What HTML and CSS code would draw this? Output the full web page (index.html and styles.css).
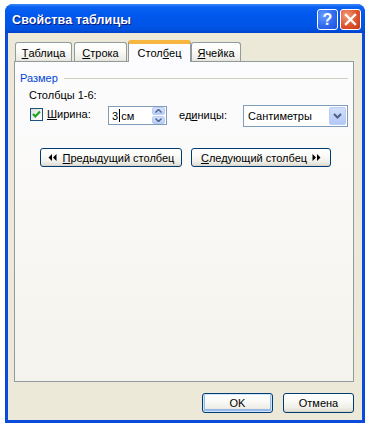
FILE: index.html
```html
<!DOCTYPE html>
<html lang="ru">
<head>
<meta charset="utf-8">
<title>Свойства таблицы</title>
<link rel="stylesheet" href="styles.css">
</head>
<body>
<div class="window">
  <div class="titlebar">
    <span class="title">Свойства таблицы</span>
    <div class="caption-btns">
      <div class="cbtn help">?</div>
      <div class="cbtn close">
        <svg width="21" height="21" viewBox="0 0 21 21"><path d="M6 6 L15 15 M15 6 L6 15" stroke="#fff" stroke-width="2.4" stroke-linecap="square"/></svg>
      </div>
    </div>
  </div>
  <div class="client">
    <div class="tabs">
      <div class="tab t1"><u>Т</u>аблица</div>
      <div class="tab t2"><u>С</u>трока</div>
      <div class="tab t3 active">Стол<u>б</u>ец</div>
      <div class="tab t4"><u>Я</u>чейка</div>
    </div>
    <div class="panel">
      <div class="group-head"><span class="group-label">Размер</span><div class="group-line"></div></div>
      <div class="cols-label">Столбцы 1-6:</div>
      <div class="width-row">
        <span class="check">
          <svg width="11" height="11" viewBox="0 0 11 11"><path d="M2 5 L4.3 7.5 L9 2.5" fill="none" stroke="#21A121" stroke-width="2.2"/></svg>
        </span>
        <span class="lbl"><u>Ш</u>ирина:</span>
        <div class="spin-input">
          <span class="val">3</span><span class="caret"></span><span class="val">см</span>
          <div class="spin">
            <div class="spin-half">
              <svg width="7" height="4" viewBox="0 0 7 4"><path d="M0.5 3.5 L3.5 0.5 L6.5 3.5" fill="none" stroke="#4D6185" stroke-width="1.4"/></svg>
            </div>
            <div class="spin-half">
              <svg width="7" height="4" viewBox="0 0 7 4"><path d="M0.5 0.5 L3.5 3.5 L6.5 0.5" fill="none" stroke="#4D6185" stroke-width="1.4"/></svg>
            </div>
          </div>
        </div>
        <span class="lbl2">ед<u>и</u>ницы:</span>
        <div class="select">
          <span class="sel-text">Сантиметры</span>
          <div class="sel-btn">
            <svg width="9" height="6" viewBox="0 0 9 6"><path d="M1 1 L4.5 4.5 L8 1" fill="none" stroke="#4D6185" stroke-width="2"/></svg>
          </div>
        </div>
      </div>
      <div class="nav-row">
        <div class="btn prev">
          <svg width="9" height="7" viewBox="0 0 9 7"><path d="M4 0 L4 7 L0.5 3.5 Z M8.5 0 L8.5 7 L5 3.5 Z" fill="#000"/></svg>
          <span><u>П</u>редыдущий столбец</span>
        </div>
        <div class="btn next">
          <span><u>С</u>ледующий столбец</span>
          <svg width="9" height="7" viewBox="0 0 9 7"><path d="M0.5 0 L0.5 7 L4 3.5 Z M5 0 L5 7 L8.5 3.5 Z" fill="#000"/></svg>
        </div>
      </div>
    </div>
    <div class="footer">
      <div class="btn ok default">OK</div>
      <div class="btn cancel">Отмена</div>
    </div>
  </div>
</div>
</body>
</html>
```
FILE: styles.css
```css
* { box-sizing: border-box; }
html, body { margin: 0; padding: 0; background: #fff; }
body {
  font-family: "Liberation Sans", Arial, sans-serif;
  font-size: 11px;
  color: #000;
}
u { text-decoration: underline; text-underline-offset: 1px; }

.window {
  margin: 4px 0 0 5px;
  width: 360px;
  height: 419px;
  display: flex;
  flex-direction: column;
  border-radius: 8px 8px 0 0;
  background: #0A4BDC;
  overflow: hidden;
}

.titlebar {
  height: 29px;
  flex: none;
  display: flex;
  align-items: flex-start;
  justify-content: space-between;
  padding: 5px 4px 0 7px;
  background: linear-gradient(to bottom, #3A8CFF 0%, #0C62F0 10%, #0058EE 35%, #0055E8 70%, #0050DE 90%, #0040C8 100%);
}
.title {
  font-weight: bold;
  font-size: 12.5px;
  color: #fff;
  margin-top: 4px;
  text-shadow: 1px 1px 0 #0A1A7A;
  letter-spacing: 0.1px;
}
.caption-btns { display: flex; gap: 2px; }
.cbtn {
  width: 21px;
  height: 21px;
  border: 1px solid #fff;
  border-radius: 3px;
  display: flex;
  align-items: center;
  justify-content: center;
}
.help {
  background: radial-gradient(circle at 30% 30%, #6B9BFF 0%, #2E6BF0 55%, #1D4FD8 100%);
  color: #fff;
  font-family: "Liberation Sans", Arial, sans-serif;
  font-weight: bold;
  font-size: 16px;
}
.close {
  background: radial-gradient(circle at 30% 30%, #F39A7C 0%, #E0532C 55%, #C4381A 100%);
}
.close svg { margin: -1px; }

.client {
  flex: 1;
  margin: 0 3px 3px 3px;
  background: #ECE9D8;
  padding: 7px 8px 7px 6px;
  display: flex;
  flex-direction: column;
}

.tabs {
  height: 21px;
  display: flex;
  align-items: flex-end;
  padding-left: 1px;
  position: relative;
  z-index: 2;
}
.tab {
  height: 19px;
  border: 1px solid #919B9C;
  border-bottom: none;
  border-radius: 3px 3px 0 0;
  background: linear-gradient(to bottom, #FFFFFF 0%, #FBFBF9 40%, #EDECE6 90%, #E3E1D8 100%);
  display: flex;
  align-items: center;
  justify-content: center;
  padding-top: 1px;
}
.t1 { width: 57px; margin-right: 2px; }
.t2 { width: 53px; margin-right: 1px; }
.t3 { width: 63px; }
.t4 { width: 50px; }
.tab.active {
  height: 22px;
  margin-bottom: -1px;
  background: #FCFCFE;
  border-top: 3px solid #FFC83C;
  box-shadow: inset 0 1px 0 #F5B640;
  border-radius: 3px 3px 0 0;
  border-top-color: #F7B640;
  padding-top: 0;
}

.panel {
  height: 321px;
  flex: none;
  border: 1px solid #919B9C;
  background: linear-gradient(to bottom, #FCFCFE 0%, #F8F7F3 60%, #F4F3EE 100%);
  padding: 9px 5px 0 5px;
  position: relative;
  z-index: 1;
}
.group-head { display: flex; align-items: center; height: 13px; }
.group-label { color: #0046D5; }
.group-line { flex: 1; height: 1px; background: #D0D0BF; margin-left: 6px; margin-top: 1px; }

.cols-label { margin: 5px 0 0 9px; height: 13px; line-height: 13px; }

.width-row {
  display: flex;
  align-items: flex-start;
  margin: 3px 0 0 10px;
  height: 23px;
}
.check {
  width: 13px;
  height: 13px;
  margin-top: 3px;
  border: 1px solid #1C5180;
  background: linear-gradient(135deg, #DCDCD7 0%, #F5F5F2 60%, #FFFFFF 100%);
  display: flex;
  align-items: center;
  justify-content: center;
}
.lbl { width: 61px; margin-left: 4px; margin-top: 3px; }
.spin-input {
  width: 59px;
  height: 19px;
  margin-top: 1px;
  border: 1px solid #7F9DB9;
  background: #fff;
  display: flex;
  align-items: center;
  padding-left: 3px;
}
.caret { width: 1px; height: 13px; background: #000; margin: 0 1px 0 1px; }
.spin {
  margin-left: auto;
  width: 14px;
  height: 17px;
  display: flex;
  flex-direction: column;
  gap: 1px;
  padding: 0 1px 0 0;
}
.spin-half {
  flex: 1;
  background: linear-gradient(to bottom, #D4E1FD, #B7CBF7);
  border: 1px solid #B9CCF5;
  border-radius: 2px;
  display: flex;
  align-items: center;
  justify-content: center;
}
.lbl2 { width: 64px; margin-left: 12px; margin-top: 4px; }
.select {
  width: 105px;
  height: 22px;
  border: 1px solid #7F9DB9;
  background: #fff;
  display: flex;
  align-items: center;
  padding: 1px 1px 1px 4px;
}
.sel-text { flex: 1; }
.sel-btn {
  width: 17px;
  height: 18px;
  border-radius: 2px;
  background: linear-gradient(to bottom, #D1DFFD, #B4C8F6);
  border: 1px solid #BACDF6;
  display: flex;
  align-items: center;
  justify-content: center;
}

.nav-row {
  display: flex;
  gap: 9px;
  margin: 20px 0 0 20px;
}
.btn {
  height: 19px;
  border: 1px solid #003C74;
  border-radius: 3px;
  background: linear-gradient(to bottom, #FFFFFF 0%, #FAFAF7 40%, #F0EFE8 75%, #E3E1D6 92%, #D6D0C5 100%);
  display: flex;
  align-items: center;
  justify-content: center;
}
.prev { width: 142px; gap: 6px; }
.next { width: 140px; gap: 5px; }

.footer {
  display: flex;
  justify-content: flex-end;
  gap: 10px;
  margin-top: 11px;
}
.footer .btn { width: 71px; height: 20px; }
.btn.default {
  box-shadow: inset 0 0 0 1px #CEE7FF, inset 0 -1px 0 2px #98B8EA;
}
```
